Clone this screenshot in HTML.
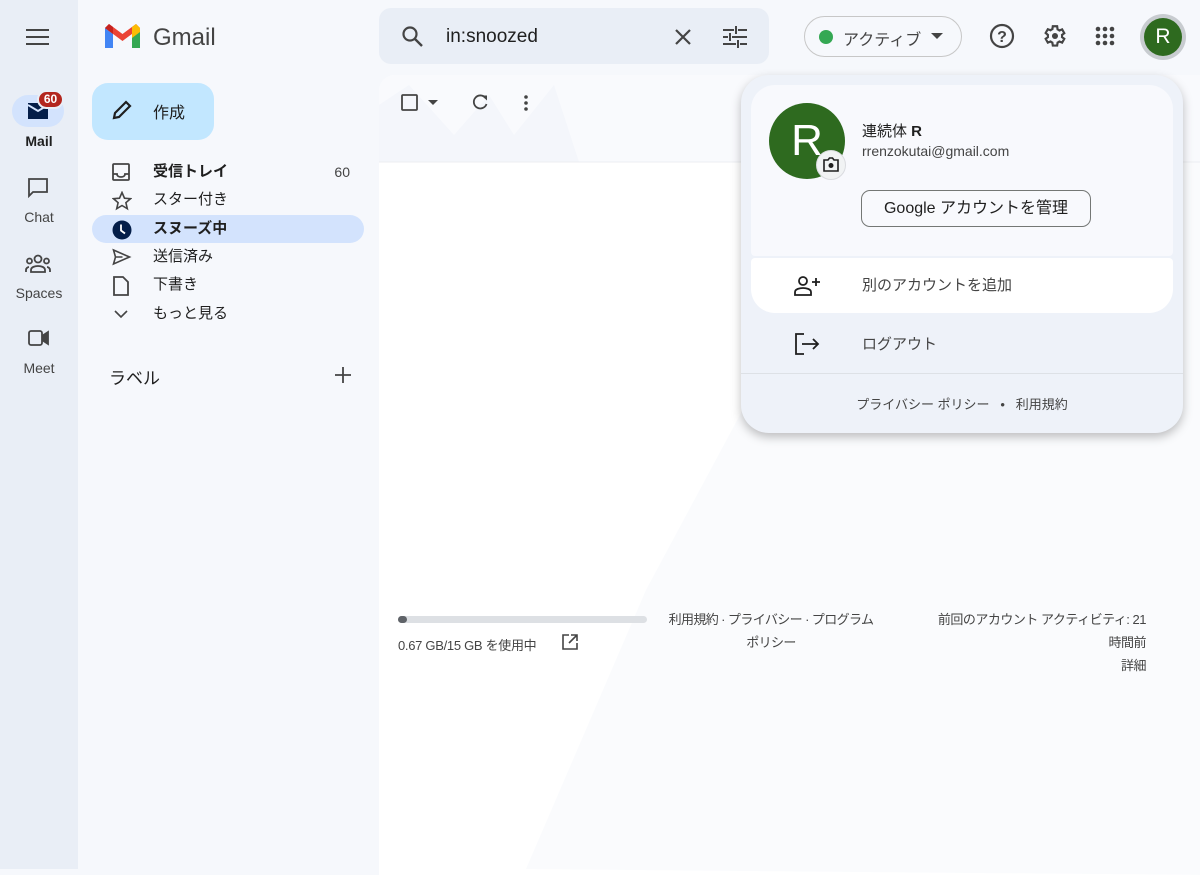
<!DOCTYPE html>
<html><head><meta charset="utf-8"><style>
*{box-sizing:border-box;margin:0;padding:0}
body{width:1200px;height:869px;overflow:hidden;background:#f6f8fc;font-family:"Liberation Sans","Noto Sans CJK JP",sans-serif;color:#1f1f1f;position:relative}
.abs{position:absolute}
.rail{left:0;top:0;width:78px;height:869px;background:#e9eef6}
.ri{width:78px;text-align:center;font-size:14px;color:#444}
.nav{left:92px;height:28px;width:272px;border-radius:14px;font-size:15px;line-height:28px;padding-left:61px}
.nav svg{position:absolute;left:20px;top:5px}
.main{left:379px;top:75px;width:830px;height:800px;background:#fff;border-radius:16px 0 0 0;overflow:hidden}
.pop{left:741px;top:75px;width:442px;height:358px;background:#eef2f9;border-radius:28px;box-shadow:0 4px 10px rgba(0,0,0,.25)}
.ft{font-size:13px;color:#444}
</style></head><body>
<div class="abs rail"></div>
<svg class="abs" style="left:26px;top:28px" width="24" height="18"><path d="M0 2h23M0 9h23M0 16h23" stroke="#444" stroke-width="2"/></svg>
<div class="abs" style="left:12px;top:95px;width:52px;height:32px;border-radius:16px;background:#d3e3fd"></div>
<svg class="abs" style="left:28px;top:103px" width="20" height="16"><path d="M0 0h20v16H0z" fill="#041e49"/><path d="M0 2l10 6 10-6" stroke="#d3e3fd" stroke-width="2" fill="none"/></svg>
<div class="abs" style="left:37px;top:90px;width:27px;height:19px;border-radius:10px;background:#b3261e;border:2px solid #e9eef6;color:#fff;font-size:12px;font-weight:bold;text-align:center;line-height:15px">60</div>
<div class="abs ri" style="top:133px;font-weight:bold;color:#1f1f1f">Mail</div>
<svg class="abs" style="left:28px;top:178px" width="20" height="20"><path d="M1 1h18v13H5l-4 4z" fill="none" stroke="#444" stroke-width="1.8"/></svg>
<div class="abs ri" style="top:209px">Chat</div>
<svg class="abs" style="left:25px;top:254px" width="26" height="20" fill="none" stroke="#444" stroke-width="1.8"><circle cx="13" cy="5" r="3.5"/><circle cx="4.5" cy="7" r="2.5"/><circle cx="21.5" cy="7" r="2.5"/><path d="M6 18v-2c0-3 4-4 7-4s7 1 7 4v2zM1 18v-2c0-2 2-3 3-3M25 18v-2c0-2-2-3-3-3"/></svg>
<div class="abs ri" style="top:285px">Spaces</div>
<svg class="abs" style="left:28px;top:330px" width="22" height="16" fill="none" stroke="#444" stroke-width="1.8"><rect x="1" y="1" width="13" height="14" rx="2"/><path d="M14 6l6-4v12l-6-4" fill="#444"/></svg>
<div class="abs ri" style="top:360px">Meet</div>

<svg class="abs" style="left:105px;top:24px" width="35" height="26" viewBox="0 0 35 26"><path d="M0 4v20h8V10z" fill="#4285f4"/><path d="M27 10v14h8V4z" fill="#34a853"/><path d="M0 4l17.5 13L35 4 31 0 17.5 10 4 0z" fill="#ea4335"/><path d="M27 3l4-3 4 4v4l-8 6z" fill="#fbbc04"/><path d="M0 4l4-4 4 3v7L0 4z" fill="#c5221f"/></svg>
<div class="abs" style="left:153px;top:24px;font-size:24px;color:#444">Gmail</div>

<div class="abs" style="left:92px;top:83px;width:122px;height:57px;border-radius:16px;background:#c2e7ff"></div>
<svg class="abs" style="left:111px;top:99px" width="22" height="22"><path d="M3 19l1-5L15 3l4 4L8 18z" fill="none" stroke="#1f1f1f" stroke-width="2.2"/></svg>
<div class="abs" style="left:153px;top:99px;font-size:16px">作成</div>

<div class="abs nav" style="top:158px;font-weight:bold"><svg width="18" height="18" fill="none" stroke="#444" stroke-width="1.8"><rect x="1" y="1" width="16" height="16" rx="1"/><path d="M1 11h4c0 2 2 3 4 3s4-1 4-3h4"/></svg>受信トレイ<span class="abs" style="right:14px;font-weight:normal;font-size:14px;color:#444">60</span></div>
<div class="abs nav" style="top:186px"><svg width="20" height="20"><path d="M10 1.5l2.5 5.7 6 .5-4.6 4 1.4 6L10 14.5l-5.3 3.2 1.4-6-4.6-4 6-.5z" fill="none" stroke="#444" stroke-width="1.6"/></svg>スター付き</div>
<div class="abs nav" style="top:215px;background:#d3e3fd;font-weight:bold"><svg width="20" height="20"><circle cx="10" cy="10" r="9.5" fill="#041e49"/><path d="M9 4.5v6l4 3" stroke="#fff" stroke-width="1.8" fill="none"/></svg>スヌーズ中</div>
<div class="abs nav" style="top:243px"><svg width="20" height="18"><path d="M1.5 2l16 7-16 7 2-7zM3.5 9h7" fill="none" stroke="#444" stroke-width="1.6"/></svg>送信済み</div>
<div class="abs nav" style="top:271px"><svg width="18" height="20"><path d="M2 1h9l5 5v13H2z" fill="none" stroke="#444" stroke-width="1.8"/></svg>下書き</div>
<div class="abs nav" style="top:300px"><svg width="18" height="18"><path d="M3 6l6 6 6-6" fill="none" stroke="#444" stroke-width="1.6"/></svg>もっと見る</div>
<div class="abs" style="left:109px;top:364px;font-size:17px">ラベル</div>
<svg class="abs" style="left:334px;top:366px" width="18" height="18"><path d="M9 1v16M1 9h16" stroke="#444" stroke-width="1.8"/></svg>

<div class="abs" style="left:379px;top:8px;width:390px;height:56px;border-radius:12px;background:#e9eef6"></div>
<svg class="abs" style="left:401px;top:25px" width="24" height="24"><circle cx="9" cy="9" r="6.5" fill="none" stroke="#444" stroke-width="2.2"/><path d="M14 14l7 7" stroke="#444" stroke-width="2.4"/></svg>
<div class="abs" style="left:446px;top:26px;font-size:19px">in:snoozed</div>
<svg class="abs" style="left:674px;top:28px" width="18" height="18"><path d="M2 2l14 14M16 2L2 16" stroke="#444" stroke-width="2.2"/></svg>
<svg class="abs" style="left:723px;top:26px" width="24" height="22" stroke="#444" stroke-width="2"><path d="M0 4h11M15 4h9M0 11h5M9 11h15M0 18h13M17 18h7M13 0v8M7 7v8M15 14v8"/></svg>

<div class="abs" style="left:804px;top:16px;width:158px;height:41px;border-radius:21px;border:1px solid #c7c7c7"></div>
<div class="abs" style="left:819px;top:30px;width:14px;height:14px;border-radius:50%;background:#34a853"></div>
<div class="abs" style="left:843px;top:26px;font-size:16px;color:#444">アクティブ</div>
<svg class="abs" style="left:931px;top:33px" width="12" height="7"><path d="M0 0h12L6 6z" fill="#444"/></svg>
<svg class="abs" style="left:989px;top:23px" width="26" height="26"><circle cx="13" cy="13" r="11" fill="none" stroke="#444" stroke-width="2.2"/><text x="13" y="19" font-size="16" font-weight="bold" text-anchor="middle" fill="#444" font-family="Liberation Sans">?</text></svg>
<svg class="abs" style="left:1041px;top:23px" width="26" height="26" viewBox="0 0 24 24"><path d="M19.4 13a7.6 7.6 0 000-2l2.1-1.6-2-3.5-2.5 1a7 7 0 00-1.7-1L14.9 3h-4l-.4 2.7a7 7 0 00-1.700 1l-2.5-1-2 3.5L6.4 11a7.6 7.6 0 000 2l-2.1 1.6 2 3.5 2.5-1a7 7 0 001.7 1l.4 2.7h4l.4-2.7a7 7 0 001.7-1l2.5 1 2-3.5z" fill="none" stroke="#444" stroke-width="2"/><circle cx="12.9" cy="12" r="2.8" fill="#444"/></svg>
<svg class="abs" style="left:1095px;top:26px" width="20" height="20" fill="#444"><circle cx="3" cy="3" r="2.3"/><circle cx="10" cy="3" r="2.3"/><circle cx="17" cy="3" r="2.3"/><circle cx="3" cy="10" r="2.3"/><circle cx="10" cy="10" r="2.3"/><circle cx="17" cy="10" r="2.3"/><circle cx="3" cy="17" r="2.3"/><circle cx="10" cy="17" r="2.3"/><circle cx="17" cy="17" r="2.3"/></svg>
<div class="abs" style="left:1140px;top:14px;width:46px;height:46px;border-radius:50%;background:#c8ccd0"></div>
<div class="abs" style="left:1144px;top:18px;width:38px;height:38px;border-radius:50%;background:#2e6a1f;color:#fff;font-size:21px;text-align:center;line-height:38px">R</div>

<div class="abs main">
<svg class="abs" style="left:0;top:0" width="830" height="800"><path d="M147 794L267 515 420 230 560 0 830 0 830 800z" fill="#fafbfd"/><rect x="0" y="0" width="830" height="87" fill="#f9fafd"/><path d="M0 30L30 10 75 60 110 20 135 60 175 10 200 87H0z" fill="#f4f6fb"/><path d="M0 87h830" stroke="#eceef2"/></svg>
<svg class="abs" style="left:22px;top:19px" width="40" height="18"><rect x="1" y="1" width="15" height="15" rx="1" fill="none" stroke="#444" stroke-width="1.8"/><path d="M27 6h10l-5 5z" fill="#444"/></svg>
<svg class="abs" style="left:92px;top:18px" width="18" height="18"><path d="M14.5 5A6.5 6.5 0 1015.5 11" fill="none" stroke="#444" stroke-width="1.8"/><path d="M10.5 2.5h5.5v5z" fill="#444"/></svg>
<svg class="abs" style="left:144px;top:19px" width="6" height="18" fill="#444"><circle cx="3" cy="3" r="1.8"/><circle cx="3" cy="9" r="1.8"/><circle cx="3" cy="15" r="1.8"/></svg>
<div class="abs" style="left:19px;top:541px;width:249px;height:7px;border-radius:4px;background:#dde0e4"></div>
<div class="abs" style="left:19px;top:541px;width:9px;height:7px;border-radius:4px;background:#5f6368"></div>
<div class="abs ft" style="left:19px;top:560px;letter-spacing:-.3px">0.67 GB/15 GB を使用中</div>
<svg class="abs" style="left:183px;top:559px" width="16" height="16" fill="none" stroke="#444" stroke-width="1.6"><path d="M7 1H1v14h14V9M9 1h6v6M15 1L7 9"/></svg>
<div class="abs ft" style="left:262px;top:533px;width:260px;text-align:center;line-height:23px;letter-spacing:-.6px;white-space:nowrap">利用規約 · プライバシー · プログラム<br>ポリシー</div>
<div class="abs ft" style="left:520px;top:533px;width:247px;text-align:right;line-height:23px;letter-spacing:-.5px">前回のアカウント アクティビティ: 21<br>時間前<br>詳細</div>
</div>

<div class="abs pop">
<div class="abs" style="left:10px;top:10px;width:422px;height:171px;background:#f8f9fd;border-radius:24px 24px 4px 4px"></div>
<div class="abs" style="left:10px;top:183px;width:422px;height:55px;background:#fff;border-radius:4px 4px 24px 24px"></div>
<div class="abs" style="left:28px;top:28px;width:76px;height:76px;border-radius:50%;background:#2e6a1f;color:#fff;font-size:44px;text-align:center;line-height:76px">R</div>
<div class="abs" style="left:75px;top:75px;width:30px;height:30px;border-radius:50%;background:#f1f3f4;border:1px solid #dadce0"></div>
<svg class="abs" style="left:82px;top:82px" width="16" height="15"><path d="M1 3h4l1.5-2h3L11 3h4v11H1z" fill="none" stroke="#1f1f1f" stroke-width="1.6"/><circle cx="8" cy="8.5" r="2.5" fill="#1f1f1f"/></svg>
<div class="abs" style="left:121px;top:45px;font-size:15px">連続体 <span style="font-weight:bold">R</span></div>
<div class="abs" style="left:121px;top:68px;font-size:14px;color:#444">rrenzokutai@gmail.com</div>
<div class="abs" style="left:120px;top:115px;width:230px;height:37px;border:1px solid #747775;border-radius:9px;text-align:center;line-height:35px;font-size:16px">Google アカウントを管理</div>
<svg class="abs" style="left:53px;top:201px" width="27" height="20" fill="none" stroke="#1f1f1f" stroke-width="1.8"><circle cx="9" cy="5" r="4"/><path d="M1 19v-3c0-3 5-4 8-4s8 1 8 4v3zM22 2v8M18 6h8"/></svg>
<div class="abs" style="left:121px;top:199px;font-size:15px;color:#444">別のアカウントを追加</div>
<svg class="abs" style="left:54px;top:258px" width="25" height="22" fill="none" stroke="#1f1f1f" stroke-width="1.8"><path d="M9 1H1v20h8M7 11h16M18 6l5 5-5 5"/></svg>
<div class="abs" style="left:121px;top:258px;font-size:15px;color:#444">ログアウト</div>
<div class="abs" style="left:0;top:298px;width:442px;height:1px;background:#dde1e6"></div>
<div class="abs" style="left:0;top:319px;width:442px;text-align:center;font-size:13px;color:#444">プライバシー ポリシー &nbsp; • &nbsp; 利用規約</div>
</div>
</body></html>
